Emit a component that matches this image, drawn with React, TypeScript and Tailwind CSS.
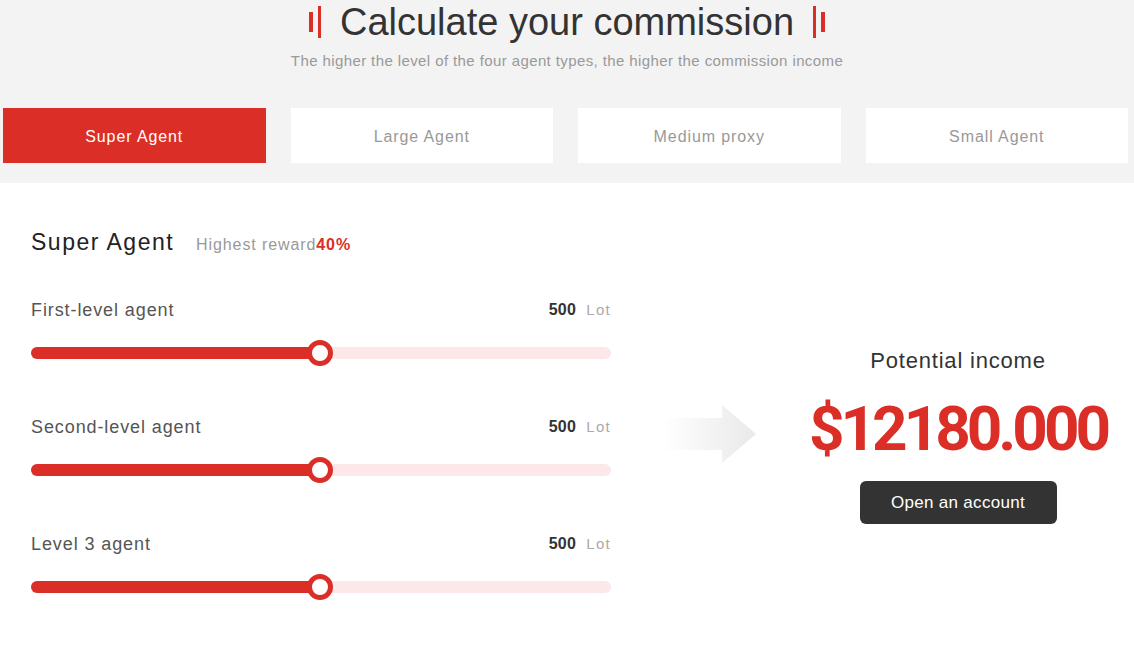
import React from "react";

const tabs = ["Super Agent", "Large Agent", "Medium proxy", "Small Agent"];
const rows = ["First-level agent", "Second-level agent", "Level 3 agent"];

function Slider() {
  return (
    <div className="relative h-[26px] w-[580px] flex items-center">
      <div className="h-[12px] w-full rounded-full bg-[#fce8e8]">
        <div className="h-[12px] w-[290px] rounded-full bg-[#da2e27]" />
      </div>
      <div className="absolute left-[276px] top-0 h-[26px] w-[26px] rounded-full border-[5px] border-[#da2e27] bg-white" />
    </div>
  );
}

export default function App() {
  return (
    <div className="w-[1134px] h-[646px] overflow-hidden bg-white" style={{ fontFamily: '"Liberation Sans", Arial, sans-serif' }}>
      <div className="bg-[#f3f3f3] pb-[20px]">
        <div className="flex justify-center items-center h-[44px]">
          <div className="flex items-center gap-[5px]">
            <div className="w-[4px] h-[20px] bg-[#da2e27]" />
            <div className="w-[3px] h-[32px] bg-[#da2e27]" />
          </div>
          <div className="mx-[19px] text-[38px] leading-[44px] text-[#333]">Calculate your commission</div>
          <div className="flex items-center gap-[5px]">
            <div className="w-[3px] h-[32px] bg-[#da2e27]" />
            <div className="w-[4px] h-[20px] bg-[#da2e27]" />
          </div>
        </div>
        <div className="mt-[7px] text-center text-[15px] leading-[20px] tracking-[0.4px] text-[#999]">
          The higher the level of the four agent types, the higher the commission income
        </div>
        <div className="mt-[37px] grid grid-cols-4 gap-x-[25px] pl-[3px] pr-[6px]">
          {tabs.map((t, i) => (
            <div
              key={t}
              className={
                i === 0
                  ? "h-[55px] flex items-center justify-center bg-[#da2e27] text-white text-[16px] tracking-[0.9px]"
                  : "h-[55px] flex items-center justify-center bg-white text-[#999] text-[16px] tracking-[0.9px]"
              }
            >
              <span className="pt-[2px]">{t}</span>
            </div>
          ))}
        </div>
      </div>
      <div className="flex pl-[31px]">
        <div className="w-[580px] pt-[45px]">
          <div className="flex items-baseline h-[28px]">
            <span className="text-[23px] leading-[28px] tracking-[1.5px] text-[#222]">Super Agent</span>
            <span className="ml-[22px] text-[16px] tracking-[0.9px] text-[#999]">
              Highest reward<span className="font-bold text-[#da2e27]">40%</span>
            </span>
          </div>
          <div className="mt-[42px] flex flex-col gap-[49px]">
            {rows.map((r) => (
              <div key={r} className="flex flex-col gap-[18px]">
                <div className="flex items-center justify-between h-[24px]">
                  <span className="text-[18px] tracking-[0.9px] text-[#555]">{r}</span>
                  <span className="flex items-center">
                    <span className="text-[16px] font-bold tracking-[0.3px] text-[#333]">500</span>
                    <span className="ml-[10px] text-[15px] tracking-[1.3px] text-[#aaa]">Lot</span>
                  </span>
                </div>
                <Slider />
              </div>
            ))}
          </div>
        </div>
        <div className="ml-[49px] mt-[222px] self-start">
          <svg width="97" height="58" viewBox="0 0 97 58">
            <defs>
              <linearGradient id="ag" x1="0" y1="0" x2="1" y2="0">
                <stop offset="0" stopColor="#ffffff" />
                <stop offset="1" stopColor="#e9e9e9" />
              </linearGradient>
            </defs>
            <path d="M3 13 H62 V0 L96 29 L62 58 V45 H3 Z" fill="url(#ag)" />
          </svg>
        </div>
        <div className="ml-[33px] w-[336px] pt-[164px] flex flex-col items-center">
          <div className="text-[22px] leading-[28px] tracking-[0.8px] text-[#333]">Potential income</div>
          <div
            className="mt-[19px] text-[62px] leading-[70px] font-bold text-[#da2e27] tracking-[-4px]"
            style={{ fontFamily: 'Roboto, "Liberation Sans", sans-serif' }}
          >
            $12180.000
          </div>
          <div className="mt-[17px] w-[197px] h-[43px] rounded-[6px] bg-[#333] text-white text-[17px] tracking-[0.3px] flex items-center justify-center">
            Open an account
          </div>
        </div>
      </div>
    </div>
  );
}
